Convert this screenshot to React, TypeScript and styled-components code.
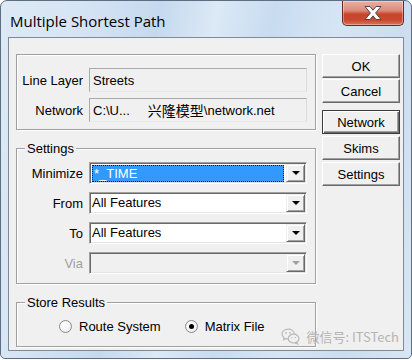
import styled, { createGlobalStyle } from 'styled-components';

const GlobalStyle = createGlobalStyle`
  html, body {
    margin: 0;
    padding: 0;
    background: #ffffff;
  }
  body {
    font-family: "Liberation Sans", Arial, sans-serif;
  }
`;

const Window = styled.div`
  position: relative;
  box-sizing: border-box;
  width: 412px;
  height: 359px;
  padding: 0 7px 7px;
  display: flex;
  flex-direction: column;
  border: 1px solid #5d6d82;
  border-radius: 7px 7px 5px 5px;
  overflow: hidden;
  background: linear-gradient(
    100deg,
    #dde9f5 0%,
    #d5e4f4 18%,
    #c5d9ee 34%,
    #dce9f6 46%,
    #c8dcf0 58%,
    #d6e5f4 72%,
    #cbddef 86%,
    #d9e6f3 100%
  );
`;

const TitleBar = styled.div`
  height: 36px;
  display: flex;
  justify-content: space-between;
  align-items: flex-start;
`;

const Title = styled.div`
  padding: 10px 0 0 2px;
  font-family: "Open Sans", "Noto Sans", sans-serif;
  font-size: 15px;
  line-height: 20px;
  color: #000000;
`;

const CloseButton = styled.div`
  box-sizing: border-box;
  width: 62px;
  height: 25px;
  display: flex;
  align-items: center;
  justify-content: center;
  border: 1px solid #6a2a22;
  border-top: none;
  border-radius: 0 0 5px 5px;
  background: linear-gradient(
    180deg,
    #e8b1a5 0%,
    #dc8a78 40%,
    #c8442b 55%,
    #c84a30 80%,
    #d9765c 100%
  );
  box-shadow: inset 0 0 0 1px rgba(255, 255, 255, 0.35);
`;

const Client = styled.div`
  flex: 1;
  display: flex;
  gap: 6px;
  padding: 16px 2px 0 7px;
  border: 1px solid #7d8a99;
  background: #f0f0f0;
`;

const LeftColumn = styled.div`
  width: 300px;
  display: flex;
  flex-direction: column;
`;

const Group = styled.div<{ $top: number; $bottom: number; $gap?: number; $mt?: number }>`
  box-sizing: border-box;
  display: flex;
  flex-direction: column;
  gap: ${(p) => p.$gap ?? 0}px;
  margin-top: ${(p) => p.$mt ?? 0}px;
  padding: ${(p) => p.$top}px 8px ${(p) => p.$bottom}px 0;
  border: 1px solid #a0a0a0;
  box-shadow: inset 1px 1px 0 #ffffff, 1px 1px 0 #ffffff;
`;

const Caption = styled.div`
  align-self: flex-start;
  margin: -8px 0 0 8px;
  padding: 0 2px;
  background: #f0f0f0;
  font-size: 13px;
  line-height: 15px;
  color: #000000;
`;

const Rows = styled.div`
  display: flex;
  flex-direction: column;
  gap: 8px;
  padding-top: 6px;
`;

const Row = styled.div`
  display: flex;
  align-items: center;
  gap: 6px;
`;

const Label = styled.div<{ $disabled?: boolean }>`
  width: 66px;
  text-align: right;
  font-size: 13px;
  color: ${(p) => (p.$disabled ? '#a0a0a0' : '#000000')};
  white-space: nowrap;
`;

const Field = styled.div`
  box-sizing: border-box;
  width: 218px;
  height: 24px;
  display: flex;
  align-items: center;
  padding-left: 3px;
  border: 1px solid;
  border-color: #a9a9a9 #dadada #e8e8e8 #a9a9a9;
  background: #f0f0f0;
  font-size: 13px;
  color: #000000;
  white-space: nowrap;
`;

const Cjk = styled.span`
  margin-left: 18px;
  font-family: "Noto Sans CJK SC", sans-serif;
  font-size: 14px;
`;

const Combo = styled.div<{ $disabled?: boolean }>`
  box-sizing: border-box;
  width: 218px;
  height: 22px;
  display: flex;
  align-items: stretch;
  gap: 2px;
  padding: 1px;
  border: 1px solid;
  border-color: #a0a0a0 #ffffff #ffffff #a0a0a0;
  box-shadow: inset 1px 1px 0 #696969, inset -1px -1px 0 #e3e3e3;
  background: ${(p) => (p.$disabled ? '#f0f0f0' : '#ffffff')};
`;

const ComboValue = styled.div<{ $selected?: boolean }>`
  flex: 1;
  display: flex;
  align-items: center;
  margin: ${(p) => (p.$selected ? '1px 0 0 1px' : '0')};
  padding-left: ${(p) => (p.$selected ? '2px' : '1px')};
  font-size: 13px;
  line-height: 16px;
  color: ${(p) => (p.$selected ? '#ffffff' : '#000000')};
  background: ${(p) => (p.$selected ? '#3399ff' : 'transparent')};
  outline: ${(p) => (p.$selected ? '1px dotted #1a1a1a' : 'none')};
  outline-offset: ${(p) => (p.$selected ? '-1px' : '0')};
  white-space: nowrap;
`;

const DropButton = styled.div`
  box-sizing: border-box;
  width: 19px;
  display: flex;
  align-items: center;
  justify-content: center;
  border: 1px solid;
  border-color: #f0f0f0 #696969 #696969 #f0f0f0;
  box-shadow: inset 1px 1px 0 #ffffff, inset -1px -1px 0 #a0a0a0;
  background: #f0f0f0;
`;

const Arrow = styled.div<{ $disabled?: boolean }>`
  width: 0;
  height: 0;
  border-left: 4px solid transparent;
  border-right: 4px solid transparent;
  border-top: 4px solid ${(p) => (p.$disabled ? '#a0a0a0' : '#000000')};
`;

const RadioRow = styled.div`
  display: flex;
  align-items: center;
  gap: 24px;
  margin-top: 8px;
  padding-left: 42px;
  height: 16px;
`;

const RadioItem = styled.div`
  display: flex;
  align-items: center;
  gap: 7px;
  font-size: 13px;
  color: #000000;
`;

const RadioCircle = styled.div<{ $checked?: boolean }>`
  box-sizing: border-box;
  width: 13px;
  height: 13px;
  border-radius: 50%;
  border: 1px solid #8a8a8a;
  background: radial-gradient(circle at 40% 40%, #ffffff 0%, #f2f2f2 60%, #d8d8d8 100%);
  display: flex;
  align-items: center;
  justify-content: center;

  &::after {
    content: '';
    display: ${(p) => (p.$checked ? 'block' : 'none')};
    width: 5px;
    height: 5px;
    border-radius: 50%;
    background: #000000;
  }
`;

const ButtonColumn = styled.div`
  width: 78px;
  display: flex;
  flex-direction: column;
  gap: 7px;
`;

const ButtonStack = styled.div<{ $gap: number }>`
  display: flex;
  flex-direction: column;
  gap: ${(p) => p.$gap}px;
`;

const Button = styled.div<{ $default?: boolean }>`
  box-sizing: border-box;
  height: 24px;
  display: flex;
  align-items: center;
  justify-content: center;
  font-size: 13px;
  color: #000000;
  background: #f0f0f0;
  border: 1px solid;
  border-color: ${(p) => (p.$default ? '#3c3c3c' : '#ffffff #696969 #696969 #ffffff')};
  box-shadow: ${(p) =>
    p.$default
      ? 'inset 1px 1px 0 #ffffff, inset -1px -1px 0 #696969, inset -2px -2px 0 #a0a0a0'
      : 'inset -1px -1px 0 #a0a0a0'};
`;

const Watermark = styled.div`
  position: absolute;
  right: 12px;
  bottom: 12px;
  display: flex;
  align-items: center;
  gap: 6px;
  font-family: "Noto Sans CJK SC", "Noto Sans", sans-serif;
  font-size: 13px;
  color: #b4b4b4;
`;

const CloseGlyph = () => (
  <svg width="22" height="16" viewBox="0 0 22 16">
    <path
      d="M3 1.5 H8 L11 5.2 L14 1.5 H19 L13.6 8 L19 14.5 H14 L11 10.8 L8 14.5 H3 L8.4 8 Z"
      fill="#ffffff"
      stroke="#4a4a4a"
      strokeWidth="1"
      strokeLinejoin="round"
    />
  </svg>
);

const WeChatIcon = () => (
  <svg width="19" height="17" viewBox="0 0 19 17">
    <path
      d="M7.2 1.2 C3.6 1.2 1 3.4 1 6.1 C1 7.7 1.9 9 3.2 9.9 L2.7 11.6 L4.7 10.6 C5.5 10.9 6.3 11 7.2 11 C7.4 11 7.6 11 7.8 11"
      fill="none"
      stroke="#b8b8b8"
      strokeWidth="1.2"
    />
    <path
      d="M7.2 1.2 C10.5 1.2 13.1 3.2 13.3 5.8"
      fill="none"
      stroke="#b8b8b8"
      strokeWidth="1.2"
    />
    <ellipse cx="12.6" cy="10.6" rx="5.4" ry="4.4" fill="none" stroke="#b8b8b8" strokeWidth="1.2" />
    <path d="M15.6 14.3 L16.6 16 L14.2 14.9" fill="none" stroke="#b8b8b8" strokeWidth="1.1" />
    <circle cx="5" cy="4.8" r="0.9" fill="#b8b8b8" />
    <circle cx="9" cy="4.8" r="0.9" fill="#b8b8b8" />
    <circle cx="10.8" cy="9.6" r="0.7" fill="#b8b8b8" />
    <circle cx="14.4" cy="9.6" r="0.7" fill="#b8b8b8" />
  </svg>
);

const App = (): JSX.Element => {
  return (
    <>
      <GlobalStyle />
      <Window>
        <TitleBar>
          <Title>Multiple Shortest Path</Title>
          <CloseButton>
            <CloseGlyph />
          </CloseButton>
        </TitleBar>
        <Client>
          <LeftColumn>
            {/* layer / network */}
            <Group $top={13} $bottom={7} $gap={6}>
              <Row>
                <Label>Line Layer</Label>
                <Field>Streets</Field>
              </Row>
              <Row>
                <Label>Network</Label>
                <Field>
                  C:\U...<Cjk>兴隆模型</Cjk>\network.net
                </Field>
              </Row>
            </Group>

            {/* settings */}
            <Group $top={0} $bottom={9} $mt={18}>
              <Caption>Settings</Caption>
              <Rows>
                <Row>
                  <Label>Minimize</Label>
                  <Combo>
                    <ComboValue $selected>*_TIME</ComboValue>
                    <DropButton>
                      <Arrow />
                    </DropButton>
                  </Combo>
                </Row>
                <Row>
                  <Label>From</Label>
                  <Combo>
                    <ComboValue>All Features</ComboValue>
                    <DropButton>
                      <Arrow />
                    </DropButton>
                  </Combo>
                </Row>
                <Row>
                  <Label>To</Label>
                  <Combo>
                    <ComboValue>All Features</ComboValue>
                    <DropButton>
                      <Arrow />
                    </DropButton>
                  </Combo>
                </Row>
                <Row>
                  <Label $disabled>Via</Label>
                  <Combo $disabled>
                    <ComboValue />
                    <DropButton>
                      <Arrow $disabled />
                    </DropButton>
                  </Combo>
                </Row>
              </Rows>
            </Group>

            {/* store results */}
            <Group $top={0} $bottom={12} $mt={18}>
              <Caption>Store Results</Caption>
              <RadioRow>
                <RadioItem>
                  <RadioCircle />
                  Route System
                </RadioItem>
                <RadioItem>
                  <RadioCircle $checked />
                  Matrix File
                </RadioItem>
              </RadioRow>
            </Group>
          </LeftColumn>

          <ButtonColumn>
            <ButtonStack $gap={1}>
              <Button>OK</Button>
              <Button>Cancel</Button>
            </ButtonStack>
            <ButtonStack $gap={2}>
              <Button $default>Network</Button>
              <Button>Skims</Button>
              <Button>Settings</Button>
            </ButtonStack>
          </ButtonColumn>
        </Client>
        <Watermark>
          <WeChatIcon />
          微信号: ITSTech
        </Watermark>
      </Window>
    </>
  );
};

export default App;
